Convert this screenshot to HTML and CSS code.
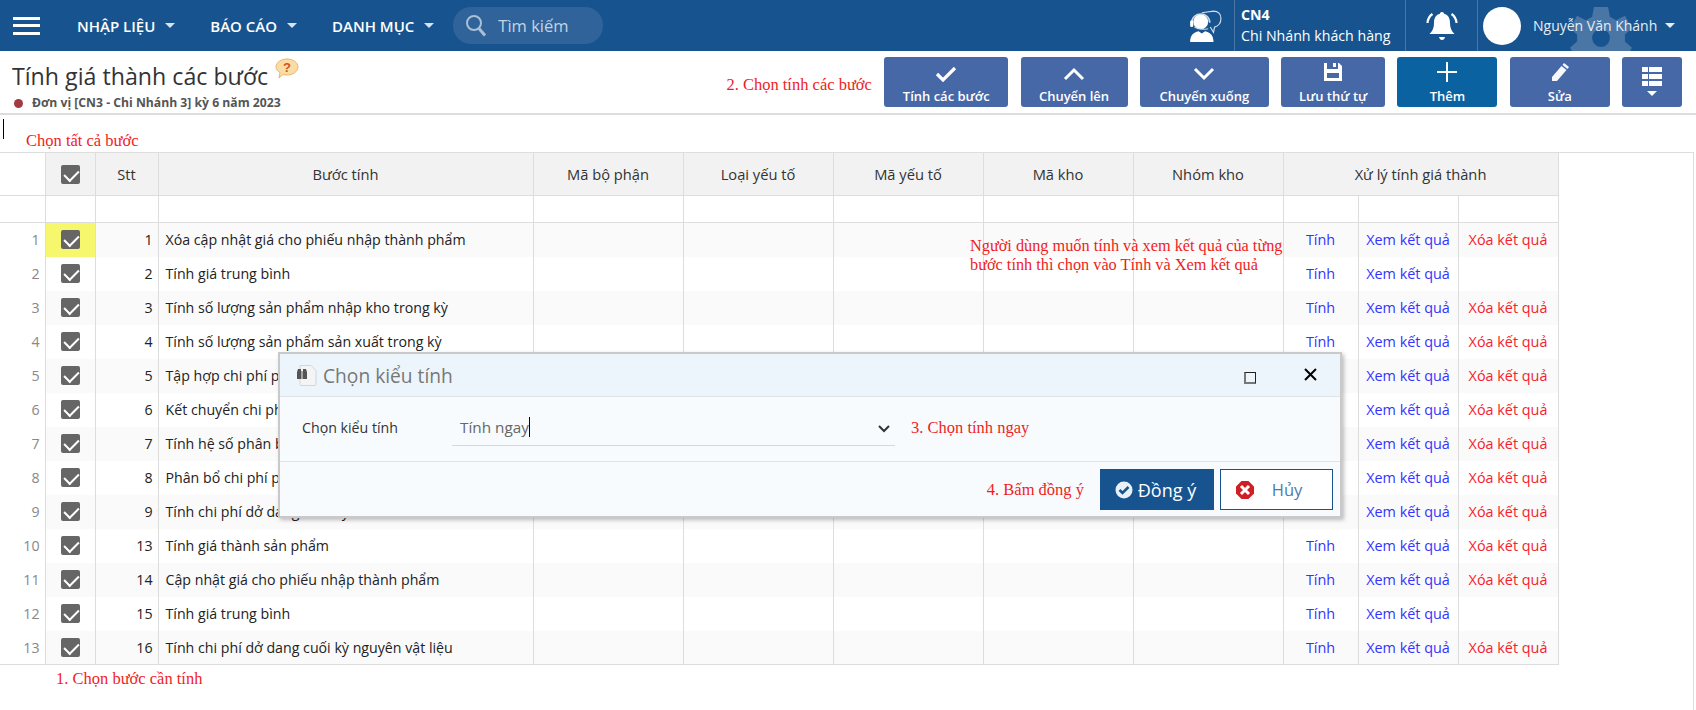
FILE: index.html
```html
<!DOCTYPE html>
<html lang="vi">
<head>
    <meta charset="UTF-8">
    <title>Tính giá thành các bước</title>
    <link rel="stylesheet" href="styles.css">
</head>
<body>
    <header class="topbar">
        <div class="burger"><span></span><span></span><span></span></div>
        <nav class="nav">
            <a class="nav-item">NHẬP LIỆU</a>
            <a class="nav-item">BÁO CÁO</a>
            <a class="nav-item">DANH MỤC</a>
        </nav>
        <div class="search">
            <svg width="22" height="24" viewBox="0 0 22 24" fill="none" stroke="#a9c0d8" stroke-width="2"><circle cx="9" cy="9" r="7"/><path d="M14 14.5l6 7" stroke-width="3"/></svg>
            <span>Tìm kiếm</span>
        </div>
        <div class="support">
            <svg width="34" height="34" viewBox="0 0 32 32">
                <path d="M13 3.500l11-1.500c4.500 0 7 3 7 7s-2 7-6 8l-1 5-3-5" fill="none" stroke="#cfdcea" stroke-width="1.100"/>
                <circle cx="12" cy="12" r="7" fill="#fff"/>
                <path d="M3.500 13c0-11 17-11 17 0" fill="none" stroke="#cfdcea" stroke-width="1.500"/>
                <rect x="2" y="10.500" width="3" height="6.500" rx="1.500" fill="#fff"/>
                <path d="M6 17c3 2 8 2.500 13 1.500" fill="none" stroke="#cfdcea"/>
                <path d="M2 31c0-6 3-9 8-10l3 2 3-2c5 1 8 4 8 10z" fill="#fff"/>
            </svg>
        </div>
        <div class="branch">
            <b>CN4</b>
            <span>Chi Nhánh khách hàng</span>
        </div>
        <div class="bell">
            <svg width="32" height="34" viewBox="0 0 32 34" fill="#fff">
                <path d="M16 3c-1.300 0-2 .8-2 1.800C9.500 6 8 9.500 8 14c0 5-1.500 8-4.500 11h25C25.500 22 24 19 24 14c0-4.500-1.500-8-6-9.200C18 3.800 17.300 3 16 3z"/>
                <path d="M13 28h6c-.5 2-1.500 3-3 3s-2.500-1-3-3z"/>
                <path d="M6.500 5C3.500 7 1.800 10 1.500 14M25.500 5c3 2 4.700 5 5 9" fill="none" stroke="#fff" stroke-width="2.200"/>
            </svg>
        </div>
        <div class="user">
            <div class="avatar"></div>
            <span class="user-name">Nguyễn Văn Khánh</span>
        </div>
        <svg class="gear" width="62" height="62" viewBox="0 0 70 70" fill="#4a76a6">
            <path fill-rule="evenodd" d="M27 0h16l2 11 7 4 10-5 8 14-8 7v8l8 7-8 14-10-5-7 4-2 11H27l-2-11-7-4-10 5-8-14 8-7v-8l-8-7 8-14 10 5 7-4zM35 25a10 10 0 1 0 .01 0z"/>
        </svg>
    </header>

    <section class="pagebar">
        <div class="pagebar-title">
            <h1>Tính giá thành các bước
                <svg class="help" width="24" height="21" viewBox="0 0 24 21">
                    <path d="M12 1c6 0 11 3.500 11 8s-5 8-11 8c-1.500 0-2.500 0-4-.5L4 20l1-5.500C2.500 13 1 11 1 9c0-4.500 5-8 11-8z" fill="#fbdca4" stroke="#e9b772"/>
                    <text x="12" y="14" text-anchor="middle" class="help-q">?</text>
                </svg>
            </h1>
            <p class="unit">Đơn vị [CN3 - Chi Nhánh 3] kỳ 6 năm 2023</p>
        </div>
        <div class="toolbar">
            <span class="note note-step2">2. Chọn tính các bước</span>
            <button class="tool w-calc">
                <svg width="22" height="16" viewBox="0 0 22 16" fill="none" stroke="#fff" stroke-width="3.200"><path d="M2 8l6 6L20 2"/></svg>
                Tính các bước
            </button>
            <button class="tool w-up">
                <svg width="22" height="16" viewBox="0 0 22 16" fill="none" stroke="#fff" stroke-width="3"><path d="M2 13l9-9 9 9"/></svg>
                Chuyển lên
            </button>
            <button class="tool w-down">
                <svg width="22" height="16" viewBox="0 0 22 16" fill="none" stroke="#fff" stroke-width="3"><path d="M2 3l9 9 9-9"/></svg>
                Chuyển xuống
            </button>
            <button class="tool w-save">
                <svg width="20" height="20" viewBox="0 0 20 20" fill="#fff"><path fill-rule="evenodd" d="M1 1h3v6h11V1h1l3 3v15H1zM4 11v5h12v-5zM10 1h3v4h-3z"/></svg>
                Lưu thứ tự
            </button>
            <button class="tool tool-add w-act">
                <svg width="20" height="20" viewBox="0 0 20 20" fill="#fff"><rect x="9" y="0" width="2" height="20"/><rect x="0" y="9" width="20" height="2"/></svg>
                Thêm
            </button>
            <button class="tool w-act">
                <svg width="20" height="20" viewBox="0 0 20 20" fill="#fff"><path d="M14 1l5 4-1.500 2-5-4zM11.500 4l5 4L7 19l-5 0 0-4z" opacity=".95"/></svg>
                Sửa
            </button>
            <button class="tool w-more">
                <svg width="22" height="32" viewBox="0 0 22 32" fill="#fff"><path d="M1 1h6v5H1zM8 1h13v5H8zM1 8h6v5H1zM8 8h13v5H8zM1 15h6v5H1zM8 15h13v5H8z"/><path d="M6 25h10l-5 5z"/></svg>
            </button>
        </div>
    </section>

    <div class="hintrow">
        <i class="text-caret"></i>
        <span class="note note-all">Chọn tất cả bước</span>
    </div>

    <main class="gridwrap">
        <table class="grid">
            <colgroup>
                <col class="c-no"><col class="c-check"><col class="c-stt"><col class="c-name">
                <col class="c-wide"><col class="c-wide"><col class="c-wide"><col class="c-wide"><col class="c-wide">
                <col class="c-calc"><col class="c-view"><col class="c-del">
            </colgroup>
            <thead>
                <tr class="head">
                    <th class="blank"></th>
                    <th><div class="cb"></div></th>
                    <th>Stt</th>
                    <th>Bước tính</th>
                    <th>Mã bộ phận</th>
                    <th>Loại yếu tố</th>
                    <th>Mã yếu tố</th>
                    <th>Mã kho</th>
                    <th>Nhóm kho</th>
                    <th colspan="3">Xử lý tính giá thành</th>
                </tr>
                <tr class="filter">
                    <td></td><td></td><td></td><td></td><td></td><td></td><td></td><td></td><td></td><td></td><td></td><td></td>
                </tr>
            </thead>
            <tbody>
                <tr><td class="no">1</td><td class="chk mark"><div class="cb"></div></td><td class="num">1</td><td>Xóa cập nhật giá cho phiếu nhập thành phẩm</td><td></td><td></td><td></td><td></td><td></td><td class="act">Tính</td><td class="act">Xem kết quả</td><td class="act del">Xóa kết quả</td></tr>
                <tr><td class="no">2</td><td class="chk"><div class="cb"></div></td><td class="num">2</td><td>Tính giá trung bình</td><td></td><td></td><td></td><td></td><td></td><td class="act">Tính</td><td class="act">Xem kết quả</td><td></td></tr>
                <tr><td class="no">3</td><td class="chk"><div class="cb"></div></td><td class="num">3</td><td>Tính số lượng sản phẩm nhập kho trong kỳ</td><td></td><td></td><td></td><td></td><td></td><td class="act">Tính</td><td class="act">Xem kết quả</td><td class="act del">Xóa kết quả</td></tr>
                <tr><td class="no">4</td><td class="chk"><div class="cb"></div></td><td class="num">4</td><td>Tính số lượng sản phẩm sản xuất trong kỳ</td><td></td><td></td><td></td><td></td><td></td><td class="act">Tính</td><td class="act">Xem kết quả</td><td class="act del">Xóa kết quả</td></tr>
                <tr><td class="no">5</td><td class="chk"><div class="cb"></div></td><td class="num">5</td><td>Tập hợp chi phí phát sinh</td><td></td><td></td><td></td><td></td><td></td><td class="act">Tính</td><td class="act">Xem kết quả</td><td class="act del">Xóa kết quả</td></tr>
                <tr><td class="no">6</td><td class="chk"><div class="cb"></div></td><td class="num">6</td><td>Kết chuyển chi phí</td><td></td><td></td><td></td><td></td><td></td><td class="act">Tính</td><td class="act">Xem kết quả</td><td class="act del">Xóa kết quả</td></tr>
                <tr><td class="no">7</td><td class="chk"><div class="cb"></div></td><td class="num">7</td><td>Tính hệ số phân bổ</td><td></td><td></td><td></td><td></td><td></td><td class="act">Tính</td><td class="act">Xem kết quả</td><td class="act del">Xóa kết quả</td></tr>
                <tr><td class="no">8</td><td class="chk"><div class="cb"></div></td><td class="num">8</td><td>Phân bổ chi phí phát sinh</td><td></td><td></td><td></td><td></td><td></td><td class="act">Tính</td><td class="act">Xem kết quả</td><td class="act del">Xóa kết quả</td></tr>
                <tr><td class="no">9</td><td class="chk"><div class="cb"></div></td><td class="num">9</td><td>Tính chi phí dở dang cuối kỳ</td><td></td><td></td><td></td><td></td><td></td><td class="act">Tính</td><td class="act">Xem kết quả</td><td class="act del">Xóa kết quả</td></tr>
                <tr><td class="no">10</td><td class="chk"><div class="cb"></div></td><td class="num">13</td><td>Tính giá thành sản phẩm</td><td></td><td></td><td></td><td></td><td></td><td class="act">Tính</td><td class="act">Xem kết quả</td><td class="act del">Xóa kết quả</td></tr>
                <tr><td class="no">11</td><td class="chk"><div class="cb"></div></td><td class="num">14</td><td>Cập nhật giá cho phiếu nhập thành phẩm</td><td></td><td></td><td></td><td></td><td></td><td class="act">Tính</td><td class="act">Xem kết quả</td><td class="act del">Xóa kết quả</td></tr>
                <tr><td class="no">12</td><td class="chk"><div class="cb"></div></td><td class="num">15</td><td>Tính giá trung bình</td><td></td><td></td><td></td><td></td><td></td><td class="act">Tính</td><td class="act">Xem kết quả</td><td></td></tr>
                <tr><td class="no">13</td><td class="chk"><div class="cb"></div></td><td class="num">16</td><td>Tính chi phí dở dang cuối kỳ nguyên vật liệu</td><td></td><td></td><td></td><td></td><td></td><td class="act">Tính</td><td class="act">Xem kết quả</td><td class="act del">Xóa kết quả</td></tr>
            </tbody>
        </table>
        <span class="note note-step1">1. Chọn bước cần tính</span>
        <p class="note note-user">Người dùng muốn tính và xem kết quả của từng<br>bước tính thì chọn vào Tính và Xem kết quả</p>
    </main>

    <!-- Hộp thoại chọn kiểu tính -->
    <div class="dialog">
        <div class="dialog-title">
            <svg width="20" height="21" viewBox="0 0 20 21">
                <path d="M3 .5h11l5 5v14a1 1 0 0 1-1 1H4a1 1 0 0 1-1-1z" fill="#f4f4f4" stroke="#d5d5d5"/>
                <path d="M1 4h3v2h.5v8H0V7zM6 4h3l1 3v7H5.500V6H6z" fill="#555"/>
            </svg>
            <span>Chọn kiểu tính</span>
            <i class="win-max"></i>
            <svg class="win-close" width="13" height="13" viewBox="0 0 13 13" stroke="#000" stroke-width="2"><path d="M1 1l11 11M12 1L1 12"/></svg>
        </div>
        <div class="dialog-body">
            <label class="field-label">Chọn kiểu tính</label>
            <div class="select">
                <span class="select-value">Tính ngay</span><i class="select-caret"></i>
                <svg class="select-arrow" width="12" height="8" viewBox="0 0 12 8" fill="none" stroke="#333" stroke-width="2"><path d="M1 1l5 5 5-5"/></svg>
            </div>
            <span class="note note-step3">3. Chọn tính ngay</span>
        </div>
        <div class="dialog-foot">
            <span class="note">4. Bấm đồng ý</span>
            <button class="btn btn-ok">
                <svg width="18" height="18" viewBox="0 0 18 18"><circle cx="9" cy="9" r="8.500" fill="#e8f0f8"/><path d="M4.500 9l3 3 6-6" fill="none" stroke="#17548f" stroke-width="2.500"/></svg>
                Đồng ý
            </button>
            <button class="btn btn-cancel">
                <svg width="18" height="18" viewBox="0 0 18 18"><path d="M5.500 0h7L18 5.500v7L12.500 18h-7L0 12.500v-7z" fill="#cf1f25"/><path d="M5 5l8 8M13 5l-8 8" stroke="#fff" stroke-width="3"/></svg>
                <span>Hủy</span>
            </button>
        </div>
    </div>
</body>
</html>
```

FILE: styles.css
```css
* { box-sizing: border-box; }
html, body { height: 710px; overflow: hidden; }
body { margin: 0; position: relative; background: #fff; color: #222; font-family: "Open Sans", "Noto Sans", sans-serif; font-size: 14.2px; }

.note { font-family: "Liberation Serif", serif; font-size: 16.5px; color: #f01d1d; font-weight: 400; white-space: nowrap; }

/* Thanh trên cùng */
.topbar { position: relative; display: flex; align-items: center; height: 51px; background: #17548f; color: #fff; overflow: hidden; }
.topbar > * { position: relative; z-index: 1; }
.burger { display: flex; flex-direction: column; justify-content: space-between; width: 27px; height: 18px; margin-left: 13px; }
.burger span { display: block; height: 3px; background: #fff; }
.nav { display: flex; margin-left: 37px; }
.nav-item { display: flex; align-items: center; font-weight: 600; font-size: 15px; margin-right: 35px; }
.nav-item::after { content: ""; margin-left: 10px; border-left: 5px solid transparent; border-right: 5px solid transparent; border-top: 5px solid #d8e3ef; }
.search { display: flex; align-items: center; gap: 11px; width: 150px; height: 37px; margin-left: -16px; padding-left: 12px; background: #2f6399; border-radius: 18px; color: #c5d4e4; font-size: 16.5px; }
.support { margin-left: auto; width: 46px; height: 51px; display: flex; align-items: center; }
.branch { display: flex; flex-direction: column; justify-content: center; gap: 3px; width: 171px; height: 51px; padding-left: 6px; border-left: 1px solid #4a76a6; line-height: 18px; }
.branch b { font-weight: 700; }
.bell { display: flex; align-items: center; justify-content: center; width: 72px; height: 51px; border-left: 1px solid #4a76a6; }
.user { display: flex; align-items: center; width: 219px; height: 51px; padding-left: 5px; border-left: 1px solid #4a76a6; }
.avatar { width: 38px; height: 38px; border-radius: 50%; background: #fff; }
.user-name { display: flex; align-items: center; margin-left: 12px; font-size: 14px; color: #e6edf5; }
.user-name::after { content: ""; margin-left: 8px; border-left: 5px solid transparent; border-right: 5px solid transparent; border-top: 5px solid #e6edf5; }
.topbar > .gear { position: absolute; left: 1570px; top: 7px; z-index: 0; }

/* Tiêu đề trang và nút lệnh */
.pagebar { display: flex; justify-content: space-between; height: 64px; border-bottom: 2px solid #ddd; }
.pagebar-title { padding: 7px 0 0 12px; }
.pagebar h1 { margin: 0; font-size: 23.2px; font-weight: 400; line-height: 34px; color: #333; white-space: nowrap; }
.help { vertical-align: 6px; margin-left: 1px; }
.help-q { font-family: "Liberation Sans", sans-serif; font-size: 13px; font-weight: 700; fill: #c9571d; }
.unit { display: flex; align-items: center; margin: 2px 0 0 2px; font-size: 12.2px; font-weight: 700; line-height: 16px; color: #555; }
.unit::before { content: ""; width: 9px; height: 9px; margin-right: 9px; border-radius: 50%; background: #a33a3f; }
.toolbar { display: flex; align-items: flex-start; gap: 12.3px; padding: 6px 14px 0 0; }
.note-step2 { align-self: center; }
.tool { display: flex; flex-direction: column; align-items: center; justify-content: flex-end; gap: 6px; height: 50px; padding: 0 0 2px; border: 0; border-radius: 3px; background: #4768a7; color: #fff; font-family: inherit; font-size: 13px; font-weight: 600; line-height: 17px; }
.tool-add { background: #0b62a0; }
.w-calc { width: 124px; }
.w-up { width: 107px; }
.w-down { width: 129px; }
.w-save { width: 104px; }
.w-act { width: 100px; }
.w-more { width: 60px; justify-content: center; padding: 0; }

.hintrow { position: relative; height: 37px; }
.text-caret { position: absolute; left: 3px; top: 4px; width: 1px; height: 20px; background: #000; }
.note-all { position: absolute; left: 26px; top: 16px; }

/* Bảng */
.gridwrap { position: relative; width: 1694px; height: 558px; border-top: 1px solid #ddd; border-right: 1px solid #ddd; }
.grid { border-collapse: collapse; table-layout: fixed; width: 1558px; margin-top: -1px; }
.c-no { width: 45px; }
.c-check { width: 50px; }
.c-stt { width: 63px; }
.c-name { width: 375px; }
.c-wide { width: 150px; }
.c-calc { width: 75px; }
.c-view, .c-del { width: 100px; }
.grid th, .grid td { padding: 0; border: 1px solid #ddd; }
.grid tr > :first-child { border-left: 0; }
.head th { height: 43px; background: #f2f2f2; font-weight: 400; font-size: 14.7px; color: #333; }
.head th.blank { background: #fff; }
.filter td { height: 27px; }
.grid tbody td { height: 34px; border-top: 0; border-bottom: 0; padding: 0 5px 0 7px; white-space: nowrap; overflow: hidden; }
.grid tbody tr:last-child td { border-bottom: 1px solid #ddd; }
.grid tbody tr:nth-child(odd) { background: #fafafa; }
.grid tbody td.no { background: #fff; text-align: right; color: #888; }
.grid tbody td.num { text-align: right; }
.grid tbody td.chk { padding: 0; }
.grid tbody td.mark { background: #f7f76e; }
.grid tbody td.act { padding: 0; text-align: center; font-size: 14.4px; color: #3333ff; }
.grid tbody td.del { color: #f5222d; }
.cb { position: relative; width: 19px; height: 19px; margin: 0 auto; border-radius: 2px; background: #666; }
.cb::after { content: ""; position: absolute; left: 6px; top: 2px; width: 7px; height: 12px; border: solid #fff; border-width: 0 2px 2px 0; transform: rotate(45deg); }
.note-step1 { position: absolute; left: 56px; top: 516px; }
.note-user { position: absolute; left: 970px; top: 84px; margin: 0; line-height: 18.5px; font-size: 16.3px; }

/* Hộp thoại */
.dialog { position: absolute; left: 278px; top: 352px; width: 1064px; height: 166px; border: 2px solid #c9c9c9; background: #f7fbfe; box-shadow: 2px 2px 4px rgba(0, 0, 0, 0.25); }
.dialog-title { display: flex; align-items: center; height: 43px; padding-left: 17px; background: #edf5fc; border-bottom: 1px solid #dde5ea; font-size: 19.2px; color: #777; }
.dialog-title span { margin-left: 6px; }
.win-max { width: 12px; height: 12px; margin: 5px 0 0 auto; border: 1px solid #222; border-width: 1px 1px 2px 2px; border-color: #222 #222 #777 #777; }
.win-close { margin: 0 23px 2px 48px; }
.dialog-body { display: flex; align-items: flex-start; height: 65px; padding-top: 20px; border-bottom: 1px solid #dde5ea; }
.field-label { width: 172px; padding-left: 22px; color: #333; line-height: 22px; }
.select { position: relative; display: flex; align-items: center; width: 443px; height: 33px; margin-top: -4px; padding: 0 0 4px 8px; border-bottom: 1px solid #d5d9dc; color: #666; font-size: 15.3px; }
.select-caret { width: 1px; height: 20px; background: #000; }
.select-arrow { position: absolute; right: 5px; top: 12px; }
.note-step3 { margin-left: 16px; line-height: 22px; }
.dialog-foot { display: flex; align-items: center; justify-content: flex-end; gap: 6px; height: 54px; padding: 1px 7px 0 0; }
.dialog-foot .note { margin-right: 10px; }
.btn { display: flex; align-items: center; justify-content: center; gap: 5px; width: 114px; height: 41px; font-family: inherit; font-size: 18px; border: 1px solid #17548f; }
.btn-ok { background: #17548f; color: #fff; padding-right: 9px; }
.btn-cancel { width: 113px; background: #fff; color: #4a7bb0; gap: 18px; padding-right: 21px; font-size: 16.5px; }
```
